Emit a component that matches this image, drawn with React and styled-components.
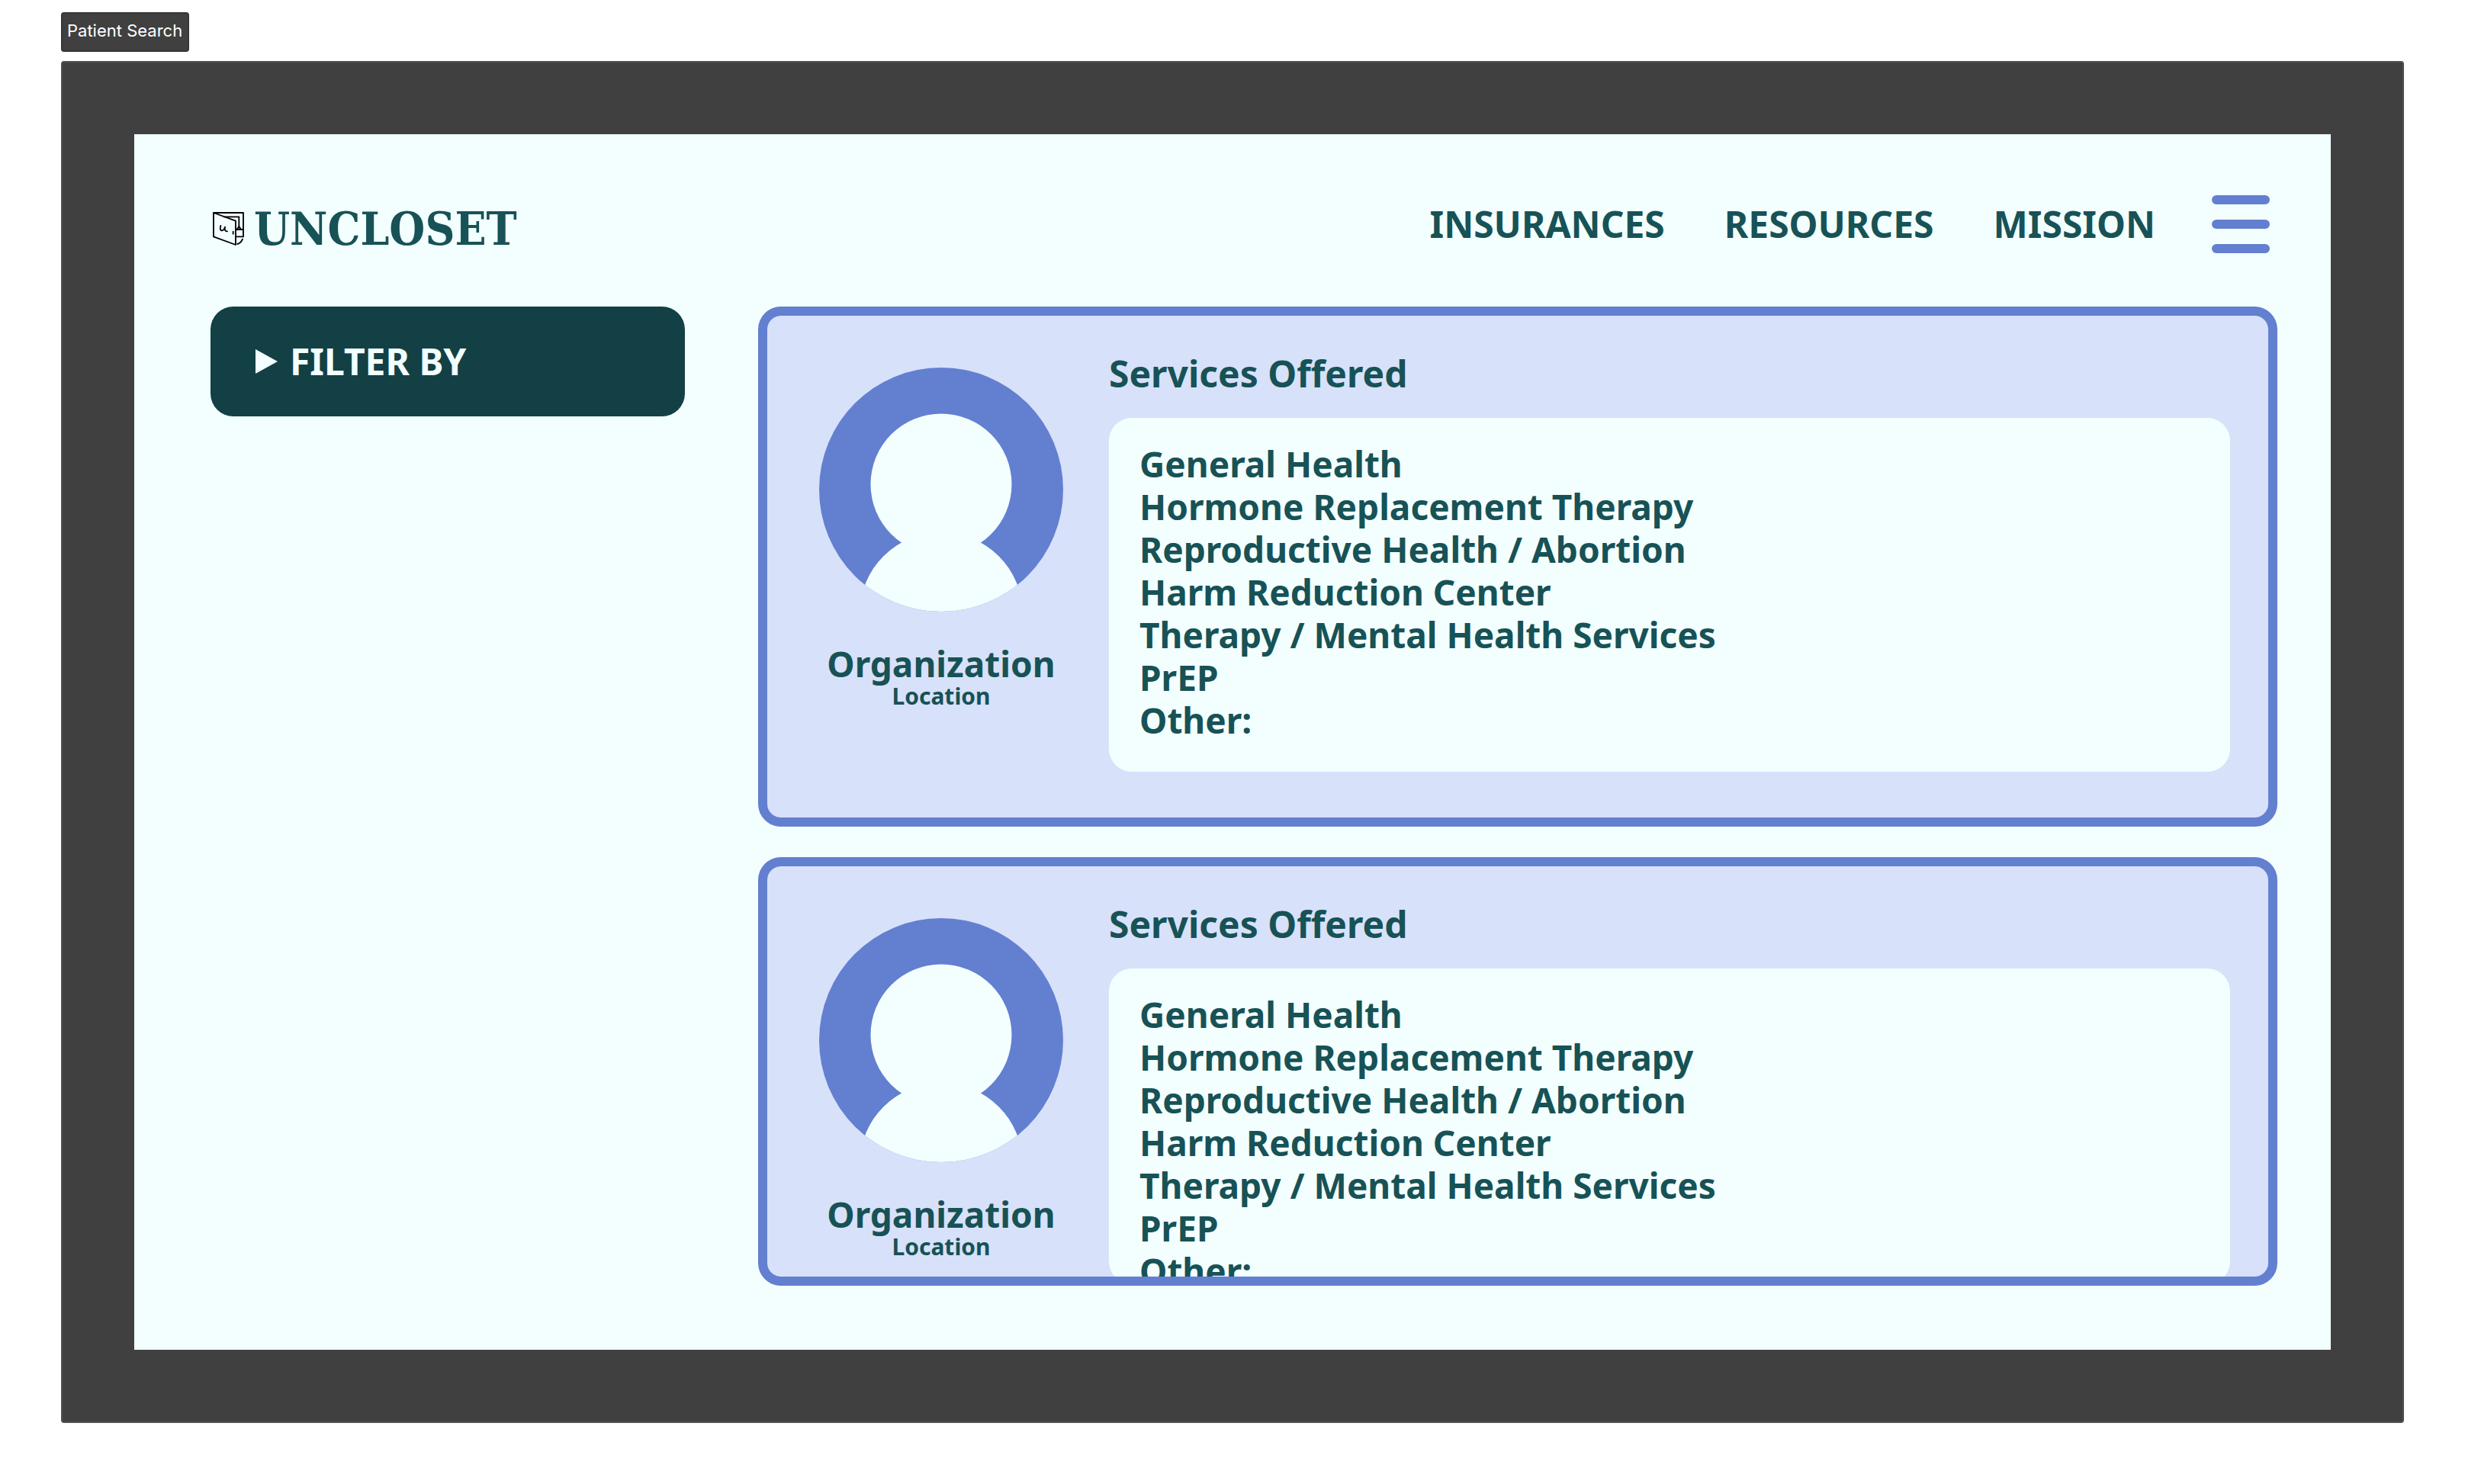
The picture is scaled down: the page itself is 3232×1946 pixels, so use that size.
import React, { useState } from "react";
import styled, { createGlobalStyle, ThemeProvider } from "styled-components";

const theme = {
  ink: "#175256",
  deep: "#124045",
  mint: "#f3ffff",
  blue: "#637fd0",
  lavender: "#d8e1fa",
  frame: "#404040",
};

const GlobalStyle = createGlobalStyle`
  *, *::before, *::after { box-sizing: border-box; }
  body {
    margin: 0;
    background: #ffffff;
    font-family: "Noto Sans", "Open Sans", sans-serif;
  }
`;

const Page = styled.div`
  display: flex;
  flex-direction: column;
  align-items: stretch;
  gap: 12px;
  height: 100vh;
  padding: 16px 80px 80px;
`;

const FrameLabel = styled.div`
  align-self: flex-start;
  padding: 10px 7px 14px 6px;
  border: 2px solid #363434;
  border-radius: 4px;
  background: ${({ theme }) => theme.frame};
  color: #ffffff;
  font: 400 22px/24px Inter, sans-serif;
`;

const Frame = styled.div`
  display: flex;
  flex: 1;
  min-height: 0;
  padding: 94px;
  border: 2px solid #505050;
  border-radius: 4px;
  background: ${({ theme }) => theme.frame};
`;

const Screen = styled.div`
  display: flex;
  flex: 1;
  flex-direction: column;
  gap: 70px;
  min-width: 0;
  padding: 80px 70px 84px 100px;
  background: ${({ theme }) => theme.mint};
  color: ${({ theme }) => theme.ink};
`;

const Header = styled.header`
  display: flex;
  align-items: center;
  justify-content: space-between;
  height: 76px;
  padding-right: 10px;
`;

const Brand = styled.a`
  display: flex;
  align-items: center;
  gap: 13px;
  padding: 12px 0 0 3px;
  color: inherit;
  font: 700 60px/64px "DejaVu Serif Condensed", "DejaVu Serif", serif;
  text-decoration: none;
`;

const Logo = styled.svg`
  width: 41px;
  height: 44px;
  fill: none;
  stroke: #000000;
  stroke-width: 5.5;
  stroke-linecap: round;
  stroke-linejoin: round;
`;

const HeaderActions = styled.div`
  display: flex;
  align-items: center;
  gap: 74px;
`;

const Nav = styled.nav`
  display: flex;
  gap: 78px;
`;

const NavLink = styled.a`
  color: inherit;
  font-size: 48px;
  font-weight: 700;
  line-height: 56px;
  text-decoration: none;
`;

const MenuButton = styled.button`
  display: flex;
  flex-direction: column;
  justify-content: space-between;
  width: 76px;
  height: 76px;
  padding: 0;
  border: 0;
  background: none;
  cursor: pointer;
`;

const MenuBar = styled.span`
  height: 12px;
  border-radius: 6px;
  background: ${({ theme }) => theme.blue};
`;

const Content = styled.main`
  display: grid;
  flex: 1;
  grid-template-columns: 622px minmax(0, 1fr);
  gap: 96px;
  min-height: 0;
`;

const FilterButton = styled.button`
  display: flex;
  align-items: center;
  align-self: start;
  gap: 16px;
  height: 144px;
  padding: 0 59px;
  border: 0;
  border-radius: 30px;
  background: ${({ theme }) => theme.deep};
  color: ${({ theme }) => theme.mint};
  font: inherit;
  font-size: 48px;
  font-weight: 700;
  line-height: 56px;
  cursor: pointer;
`;

const Marker = styled.span`
  border-style: solid;
  border-width: 16px 0 16px 29px;
  border-color: transparent transparent transparent currentColor;
  transform: rotate(${({ $open }) => ($open ? 90 : 0)}deg);
`;

const Results = styled.div`
  display: flex;
  flex-direction: column;
  gap: 40px;
  min-height: 0;
`;

const Card = styled.article`
  display: flex;
  flex: none;
  gap: 60px;
  padding: 48px 50px 60px 68px;
  border: 12px solid ${({ theme }) => theme.blue};
  border-radius: 30px;
  background: ${({ theme }) => theme.lavender};
  overflow: hidden;

  &:last-child {
    flex: 1;
    min-height: 0;
  }
`;

const Profile = styled.div`
  display: flex;
  flex: none;
  flex-direction: column;
  align-items: center;
  width: 320px;
  padding-top: 20px;
`;

const AvatarArt = styled.svg`
  flex: none;
  width: 320px;
  height: 320px;
  margin-bottom: 40px;
`;

const OrgName = styled.h2`
  margin: 0;
  font-size: 46px;
  font-weight: 700;
  line-height: 56px;
`;

const OrgPlace = styled.p`
  margin: 0;
  font-size: 30px;
  font-weight: 700;
  line-height: 30px;
`;

const Services = styled.section`
  display: flex;
  flex: 1;
  flex-direction: column;
  gap: 30px;
  min-width: 0;
`;

const ServicesTitle = styled.h3`
  margin: 0;
  font-size: 48px;
  font-weight: 700;
  line-height: 56px;
`;

const ServiceList = styled.ul`
  flex: 0 1 auto;
  min-height: 414px;
  margin: 0;
  padding: 32px 40px 40px;
  border-radius: 30px;
  background: ${({ theme }) => theme.mint};
  font-size: 46px;
  font-weight: 700;
  line-height: 56px;
  list-style: none;
`;

const links = ["INSURANCES", "RESOURCES", "MISSION"];

const services = [
  "General Health",
  "Hormone Replacement Therapy",
  "Reproductive Health / Abortion",
  "Harm Reduction Center",
  "Therapy / Mental Health Services",
  "PrEP",
  "Other:",
];

const providers = [
  { id: 1, name: "Organization", place: "Location", services },
  { id: 2, name: "Organization", place: "Location", services },
];

function ClosetLogo() {
  return (
    <Logo viewBox="26 27 123 132" aria-hidden="true">
      <path d="M29 30H146V124H119" />
      <path d="M29 30L116 62V156L29 124Z" />
      <path d="M70 46H129V84" />
      <path d="M118 96H146M121 95L129 84L137 95Z" />
      <path d="M106 104V113" />
      <path d="M57 81C54 91 55 101 62 100C69 99 72 92 74 86C72 96 74 104 83 103" />
      <path d="M143 134C139 144 133 150 123 153" />
    </Logo>
  );
}

function Avatar({ id }) {
  const clip = `avatar-${id}`;
  return (
    <AvatarArt viewBox="0 0 320 320" aria-hidden="true">
      <clipPath id={clip}>
        <circle cx="160" cy="160" r="160" />
      </clipPath>
      <g clipPath={`url(#${clip})`}>
        <rect width="320" height="320" fill={theme.blue} />
        <circle cx="160" cy="153" r="92.5" fill={theme.mint} />
        <circle cx="160" cy="322.7" r="106.8" fill={theme.mint} />
      </g>
    </AvatarArt>
  );
}

function ProviderCard({ provider }) {
  return (
    <Card>
      <Profile>
        <Avatar id={provider.id} />
        <OrgName>{provider.name}</OrgName>
        <OrgPlace>{provider.place}</OrgPlace>
      </Profile>
      <Services>
        <ServicesTitle>Services Offered</ServicesTitle>
        <ServiceList>
          {provider.services.map((service) => (
            <li key={service}>{service}</li>
          ))}
        </ServiceList>
      </Services>
    </Card>
  );
}

export default function App() {
  const [open, setOpen] = useState(false);
  return (
    <ThemeProvider theme={theme}>
      <GlobalStyle />
      <Page>
        <FrameLabel>Patient Search</FrameLabel>
        <Frame>
          <Screen>
            <Header>
              <Brand href="#home">
                <ClosetLogo />
                <span>UNCLOSET</span>
              </Brand>
              <HeaderActions>
                <Nav>
                  {links.map((link) => (
                    <NavLink key={link} href={`#${link.toLowerCase()}`}>
                      {link}
                    </NavLink>
                  ))}
                </Nav>
                <MenuButton type="button" aria-label="Menu">
                  <MenuBar />
                  <MenuBar />
                  <MenuBar />
                </MenuButton>
              </HeaderActions>
            </Header>
            <Content>
              <FilterButton
                type="button"
                aria-expanded={open}
                onClick={() => setOpen(!open)}
              >
                <Marker $open={open} />
                FILTER BY
              </FilterButton>
              <Results>
                {providers.map((provider) => (
                  <ProviderCard key={provider.id} provider={provider} />
                ))}
              </Results>
            </Content>
          </Screen>
        </Frame>
      </Page>
    </ThemeProvider>
  );
}
